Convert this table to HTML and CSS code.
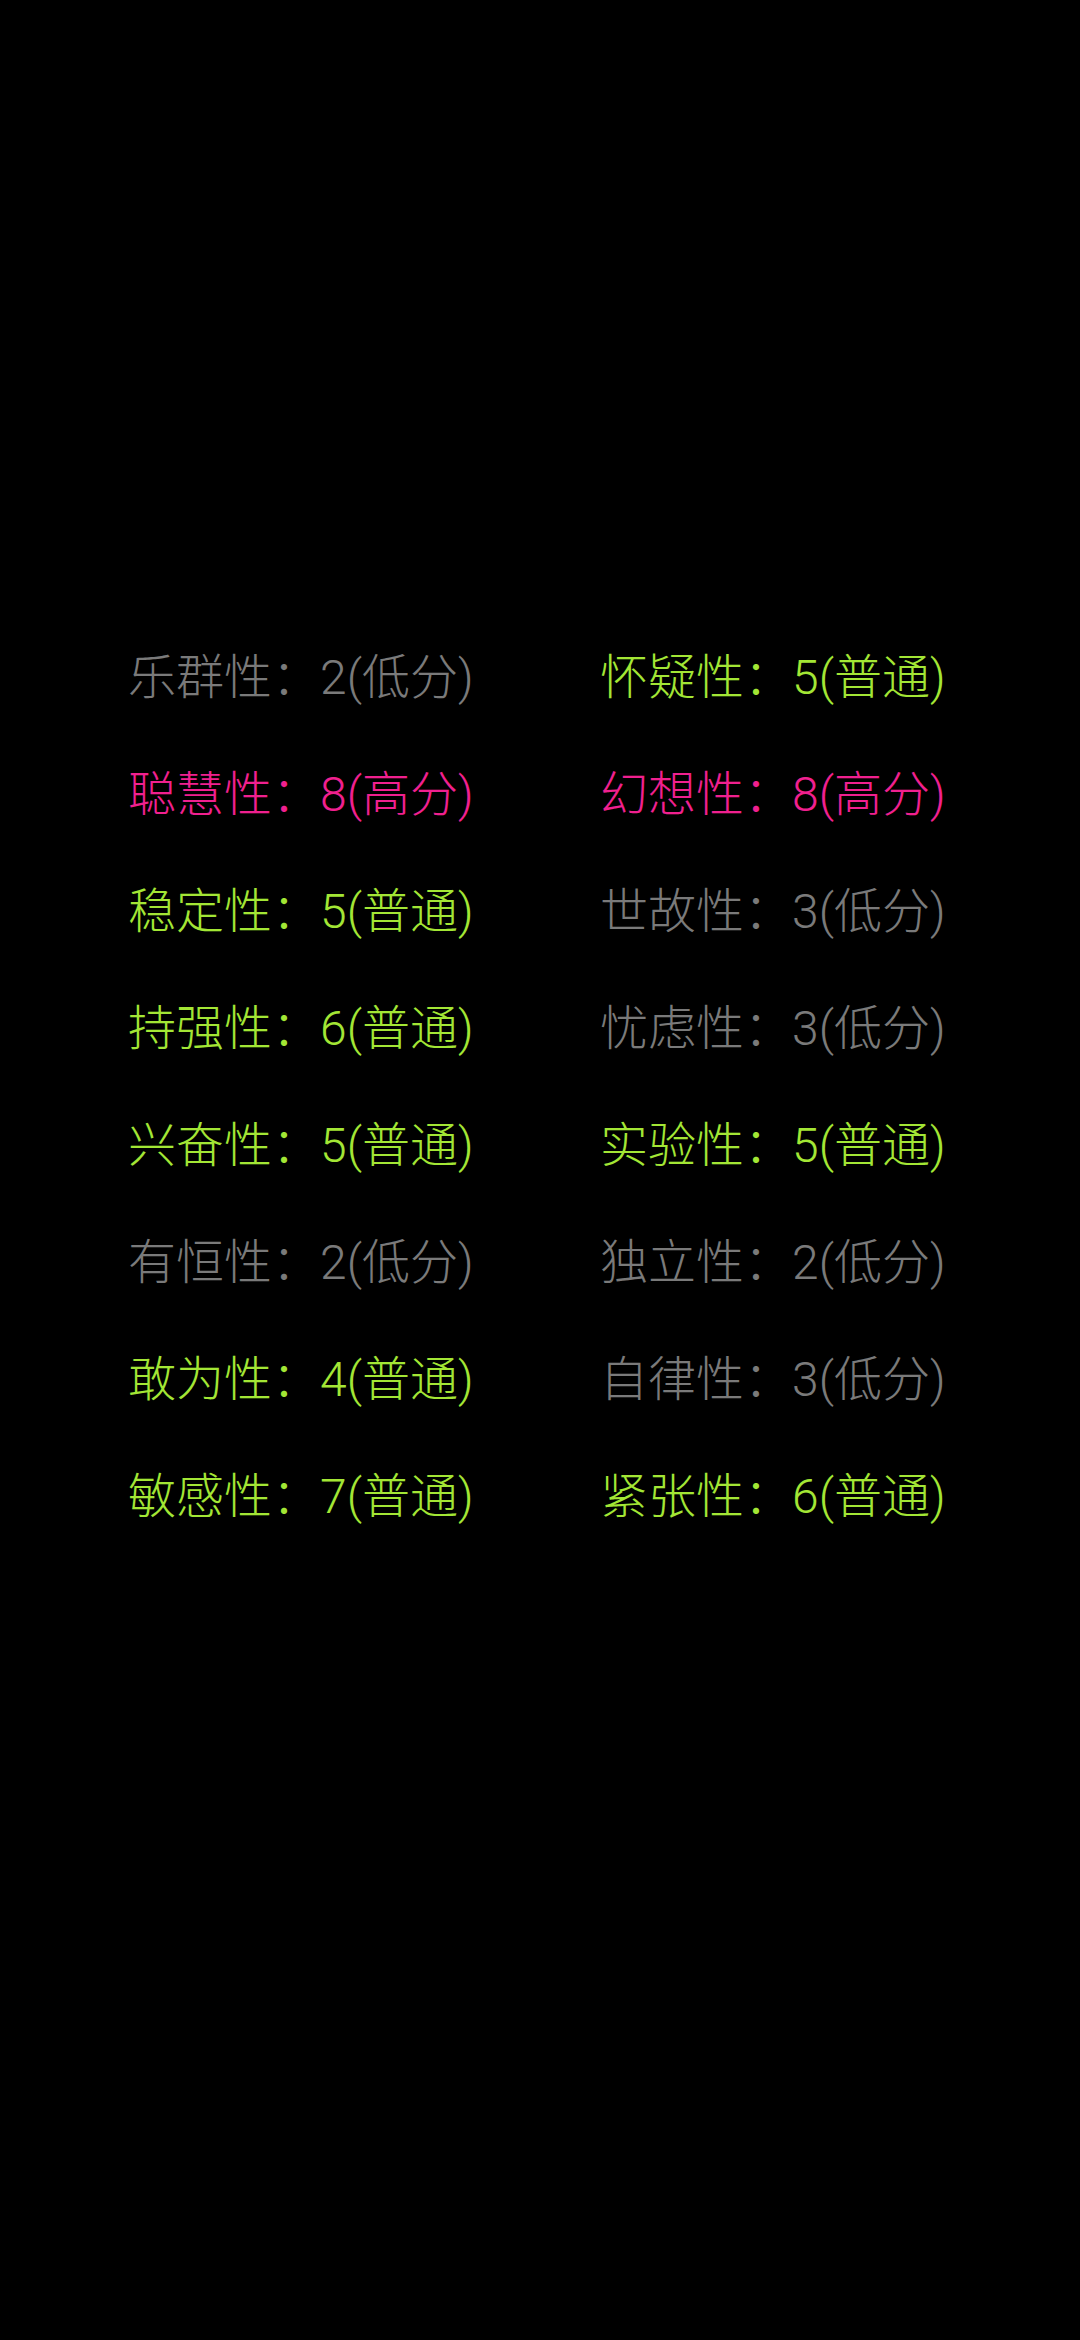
FILE: index.html
```html
<!DOCTYPE html>
<html lang="zh-CN">
<head>
    <meta charset="UTF-8">
    <meta name="viewport" content="width=device-width, initial-scale=1.0">
    <title>16PF 结果</title>
    <link rel="stylesheet" href="styles.css">
</head>
<body>

    <div class="factors">
        <div class="factor low">乐群性：2(低分)</div>
        <div class="factor mid">怀疑性：5(普通)</div>

        <div class="factor high">聪慧性：8(高分)</div>
        <div class="factor high">幻想性：8(高分)</div>

        <div class="factor mid">稳定性：5(普通)</div>
        <div class="factor low">世故性：3(低分)</div>

        <div class="factor mid">持强性：6(普通)</div>
        <div class="factor low">忧虑性：3(低分)</div>

        <div class="factor mid">兴奋性：5(普通)</div>
        <div class="factor mid">实验性：5(普通)</div>

        <div class="factor low">有恒性：2(低分)</div>
        <div class="factor low">独立性：2(低分)</div>

        <div class="factor mid">敢为性：4(普通)</div>
        <div class="factor low">自律性：3(低分)</div>

        <div class="factor mid">敏感性：7(普通)</div>
        <div class="factor mid">紧张性：6(普通)</div>
    </div>

</body>
</html>
```

FILE: styles.css
```css
* { margin: 0; padding: 0; box-sizing: border-box; }
body { background: #000; font-family: Roboto, "Noto Sans CJK SC", sans-serif; min-height: 2340px; }
.factors { display: grid; grid-template-columns: 472px auto; padding: 619px 0 0 128px; }
.factor { font-size: 48px; font-weight: 300; line-height: 117px; white-space: nowrap; }
.low { color: #7a7a7a; }
.mid { color: #a3e635; }
.high { color: #f0208f; }
```
